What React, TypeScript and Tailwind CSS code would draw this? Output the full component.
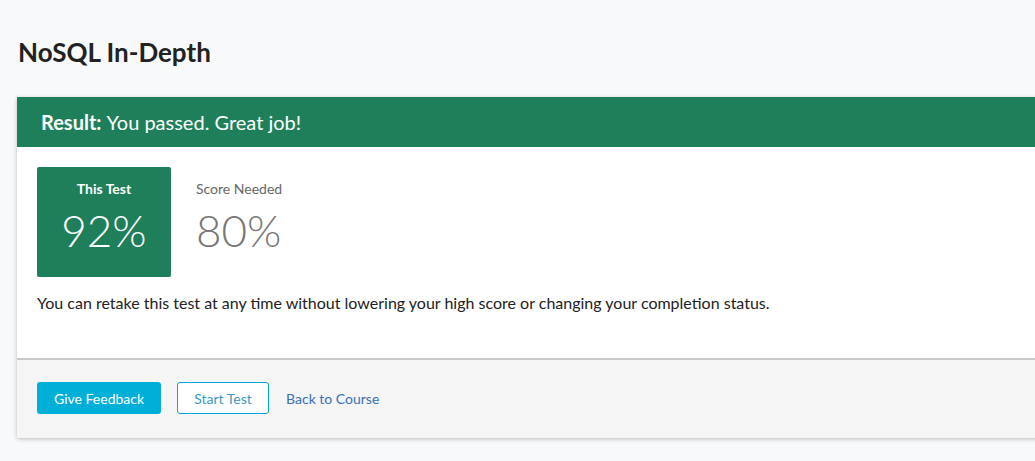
export default function App() {
  return (
    <div className="min-h-[461px] w-full overflow-hidden bg-[#f8f9fb] font-['Lato','Noto_Sans',sans-serif]">
      <h1 className="pl-[18px] pt-[35px] text-[26px] font-bold leading-[34px] text-[#222]">NoSQL In-Depth</h1>

      <div className="ml-[17px] mt-[28px] w-[1100px] bg-white shadow-[0_1px_4px_rgba(0,0,0,0.25)]">
        <div className="flex h-[50px] items-center bg-[#1e7f5a] pl-[24px] text-[20px] text-white">
          <span className="font-bold">Result:</span>
          <span className="ml-[5px]">You passed. Great job!</span>
        </div>

        <div className="px-[20px] pt-[20px]">
          <div className="flex gap-[25px]">
            <div className="flex h-[110px] w-[134px] flex-col items-center rounded-[2px] bg-[#1e7f5a] pt-[13px] text-white">
              <span className="text-[14px] font-bold leading-[18px]">This Test</span>
              <span className="mt-[5px] text-[44px] font-light leading-[54px]">92%</span>
            </div>
            <div className="flex flex-col pt-[13px]">
              <span className="text-[14px] leading-[18px] text-[#666]">Score Needed</span>
              <span className="mt-[5px] text-[44px] font-light leading-[54px] text-[#777]">80%</span>
            </div>
          </div>
          <p className="mt-[15px] pb-[44px] text-[16px] leading-[22px] text-[#222]">
            You can retake this test at any time without lowering your high score or changing your completion status.
          </p>
        </div>

        <div className="flex h-[80px] items-center gap-[16px] border-t-2 border-[#c8c8c8] bg-[#f5f5f5] px-[20px] pb-[2px]">
          <button className="h-[32px] rounded-[3px] bg-[#00afd8] px-[17px] text-[14px] text-white">Give Feedback</button>
          <button className="h-[32px] w-[92px] rounded-[3px] border border-[#00a6d6] bg-white text-[14px] text-[#3a9ac6]">Start Test</button>
          <a className="ml-[1px] text-[14px] text-[#3b6fb6]">Back to Course</a>
        </div>
      </div>
    </div>
  )
}
